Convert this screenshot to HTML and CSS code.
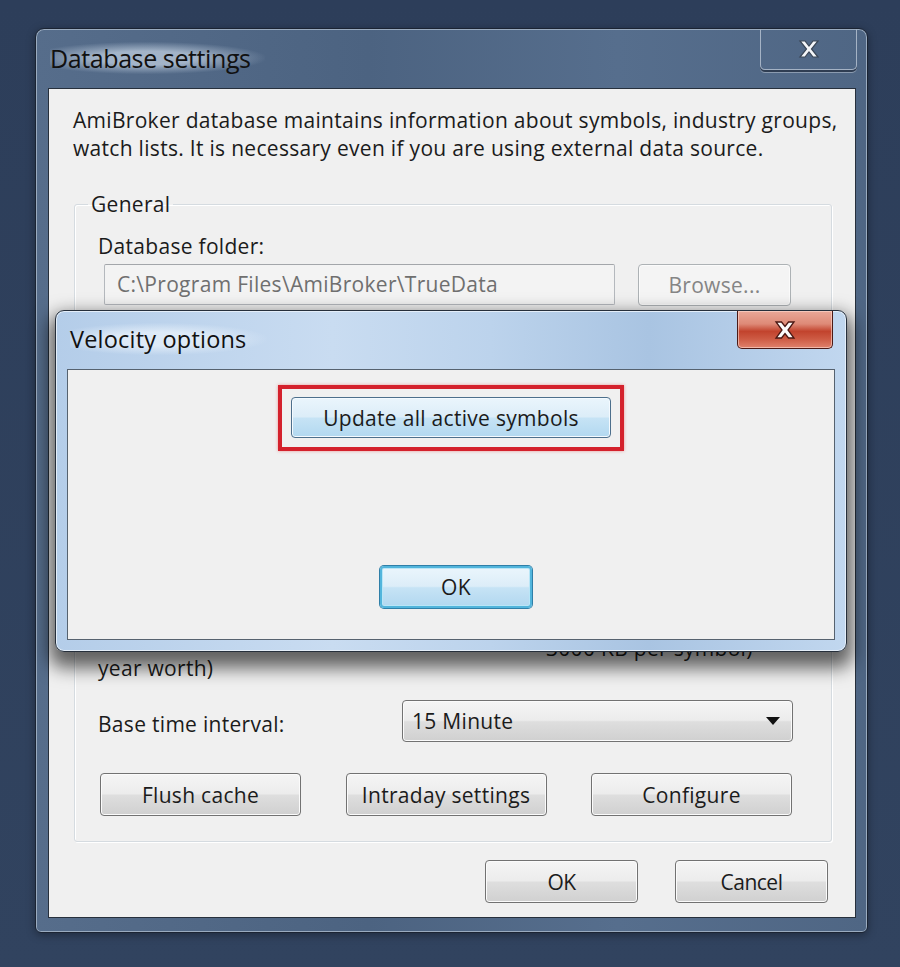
FILE: index.html
```html
<!DOCTYPE html>
<html lang="en">
<head>
    <meta charset="UTF-8">
    <title>Database settings</title>
    <link rel="stylesheet" href="styles.css">
</head>
<body>
    <div class="window">
        <div class="titlebar">
            <span class="title">Database settings</span>
            <div class="close-inactive">
                <svg width="22" height="20" viewBox="0 0 22 20"><path d="M2 2h5l4 5 4-5h5l-6.5 8 6.5 8h-5l-4-5-4 5H2l6.5-8z" fill="#f4f6f9" stroke="#3a4656" stroke-width="1.2"/></svg>
            </div>
        </div>
        <div class="client">
            <p class="intro">AmiBroker database maintains information about symbols, industry groups,<br>watch lists. It is necessary even if you are using external data source.</p>
            <fieldset class="group">
                <legend>General</legend>
                <div class="label-row">Database folder:</div>
                <div class="folder-row">
                    <div class="path-input">C:\Program Files\AmiBroker\TrueData</div>
                    <div class="btn btn-disabled browse">Browse...</div>
                </div>
                <div class="bars-row">
                    <div class="bars-label">Number of bars to load (1<br>year worth)</div>
                    <div class="bars-note">3000 KB per symbol)</div>
                </div>
                <div class="interval-row">
                    <span>Base time interval:</span>
                    <div class="btn combo">
                        <span>15 Minute</span>
                        <svg width="14" height="8" viewBox="0 0 14 8"><path d="M0 0h14L7 8z" fill="#111"/></svg>
                    </div>
                </div>
                <div class="action-row">
                    <div class="btn action">Flush cache</div>
                    <div class="btn action">Intraday settings</div>
                    <div class="btn action">Configure</div>
                </div>
            </fieldset>
            <div class="dialog-buttons">
                <div class="btn dlg-btn">OK</div>
                <div class="btn dlg-btn">Cancel</div>
            </div>
        </div>
    </div>

    <div class="popup">
        <div class="popup-titlebar">
            <span class="popup-title">Velocity options</span>
            <div class="close-red">
                <svg width="24" height="20" viewBox="0 0 24 20"><path d="M3 2h5.5l3.5 4.5 3.5-4.5H21l-6 8 6 8h-5.5L12 13.5 8.5 18H3l6-8z" fill="#fbfbfb" stroke="#4a1712" stroke-width="1.3"/></svg>
            </div>
        </div>
        <div class="popup-client">
            <div class="highlight">
                <div class="btn btn-blue update">Update all active symbols</div>
            </div>
            <div class="btn btn-blue btn-default ok">OK</div>
        </div>
    </div>
</body>
</html>
```

FILE: styles.css
```css
body {
    margin: 0;
    background: linear-gradient(#2d3e5a, #31435f);
    font-family: "Open Sans", "Noto Sans", sans-serif;
    font-size: 21px;
    letter-spacing: 0.3px;
    color: #1b1b1b;
    height: 967px;
    position: relative;
    overflow: hidden;
}
.window {
    margin: 28px 0 0 35px;
    width: 833px;
    box-sizing: border-box;
    border: 1px solid #1b2433;
    border-radius: 9px 9px 6px 6px;
    background: linear-gradient(to right, #566d8b, #4c6381 40%, #566e8d 70%, #4f6684);
    box-shadow: inset 0 0 0 1px #9aabbf, 0 2px 8px rgba(0, 0, 0, 0.35);
    padding: 0 0 14px 0;
}
.titlebar {
    height: 59px;
    display: flex;
    justify-content: space-between;
    align-items: flex-start;
    padding-left: 14px;
    padding-right: 10px;
}
.title {
    margin-top: 13px;
    font-size: 25px;
    letter-spacing: -0.4px;
    color: #111;
    line-height: 32px;
    padding: 0 14px 0 0;
    background: radial-gradient(ellipse at 45% 50%, rgba(190, 205, 222, 0.75) 30%, rgba(190, 205, 222, 0) 72%);
}
.close-inactive {
    width: 97px;
    height: 41px;
    box-sizing: border-box;
    border: 1px solid #a5b3c5;
    border-top: none;
    border-radius: 0 0 5px 5px;
    box-shadow: 0 2px 0 #2f3d52, 0 3px 0 #8b9bb0;
    display: flex;
    align-items: center;
    justify-content: center;
}
.client {
    margin: 0 11px 0 12px;
    border: 1px solid #27303c;
    background: #f0f0f0;
    padding: 0 0 14px 0;
}
.intro {
    margin: 17px 0 0 24px;
    line-height: 28px;
}
.group {
    margin: 28px 23px 0 25px;
    border: 1px solid #d5dbe0;
    border-radius: 3px;
    box-shadow: inset 1px 1px 0 #fff, 1px 1px 0 #fff;
    padding: 0 39px 25px 23px;
    min-width: 0;
}
.group legend {
    margin-left: -10px;
    padding: 0 3px;
    line-height: 28px;
}
.label-row {
    margin-top: 14px;
    line-height: 28px;
}
.folder-row {
    margin-top: 3px;
    display: flex;
    align-items: center;
    justify-content: space-between;
    height: 43px;
}
.path-input {
    margin-left: 6px;
    width: 511px;
    height: 41px;
    box-sizing: border-box;
    border: 1px solid #b4b8bd;
    border-top-color: #a3a6aa;
    border-radius: 2px;
    background: #f3f3f3;
    color: #6f6f6f;
    padding-left: 12px;
    line-height: 38px;
}
.btn {
    box-sizing: border-box;
    border: 1px solid #727272;
    border-radius: 4px;
    background: linear-gradient(#f5f5f5 0%, #ececec 48%, #dedede 52%, #d0d0d0 100%);
    box-shadow: inset 0 0 0 1px #fbfbfb;
    display: flex;
    align-items: center;
    justify-content: center;
    white-space: nowrap;
}
.btn-disabled {
    border-color: #adb2b5;
    background: #f4f4f4;
    color: #858585;
}
.browse {
    width: 153px;
    height: 42px;
    margin-right: 1px;
}
.bars-row {
    margin-top: 320px;
    display: flex;
    align-items: center;
    line-height: 28px;
}
.bars-label {
    width: 448px;
    color: #1b1b1b;
}
.bars-note {
    margin-top: -12px;
}
.interval-row {
    margin-top: 18px;
    display: flex;
    justify-content: space-between;
    align-items: center;
}
.interval-row span {
    margin-top: 6px;
}
.combo {
    width: 391px;
    height: 42px;
    margin-right: -1px;
    justify-content: space-between;
    padding: 0 12px 0 9px;
}
.combo span {
    margin-top: 0;
}
.action-row {
    margin-top: 31px;
    display: flex;
    justify-content: space-between;
    padding-left: 2px;
}
.action {
    width: 201px;
    height: 43px;
}
.dialog-buttons {
    margin: 18px 27px 0 0;
    display: flex;
    justify-content: flex-end;
    gap: 37px;
}
.dlg-btn {
    width: 153px;
    height: 43px;
    letter-spacing: -0.5px;
}
.popup {
    position: absolute;
    left: 55px;
    top: 310px;
    width: 792px;
    height: 342px;
    box-sizing: border-box;
    border: 1px solid #262f3b;
    border-radius: 9px;
    background: linear-gradient(to right, #b4cde9, #c9dcf1 35%, #bcd3ec 55%, #a9c4e2 75%, #c1d7ef);
    box-shadow: inset 0 0 0 1px #e4eef9, 0 10px 18px 6px rgba(0, 0, 0, 0.6);
    padding: 0 11px 11px 11px;
}
.popup-titlebar {
    height: 58px;
    display: flex;
    justify-content: space-between;
    align-items: flex-start;
    padding-left: 3px;
}
.popup-title {
    margin-top: 12px;
    font-size: 23.5px;
    letter-spacing: 0.2px;
    line-height: 32px;
    color: #111;
    padding-right: 20px;
    background: radial-gradient(ellipse at 45% 50%, rgba(230, 240, 250, 0.8) 30%, rgba(230, 240, 250, 0) 72%);
}
.close-red {
    width: 96px;
    height: 38px;
    box-sizing: border-box;
    margin-right: 2px;
    border: 1px solid #4b1a16;
    border-top: none;
    border-radius: 0 0 5px 5px;
    background: linear-gradient(#eaa898 0%, #de8a77 35%, #c2432d 55%, #cd5a43 75%, #e0826c 100%);
    box-shadow: inset 0 0 0 1px rgba(255, 220, 210, 0.6);
    display: flex;
    align-items: center;
    justify-content: center;
}
.popup-client {
    height: 271px;
    box-sizing: border-box;
    border: 1px solid #56626f;
    background: #f0f0f0;
    display: flex;
    flex-direction: column;
    align-items: center;
}
.highlight {
    margin-top: 15px;
    border: 4px solid #d4212c;
    padding: 8px 9px 9px 9px;
    box-shadow: 0 0 3px rgba(230, 60, 60, 0.5);
}
.btn-blue {
    border-color: #4d6f8c;
    background: linear-gradient(#eaf5fc 0%, #dcedf8 48%, #c6e3f5 52%, #b2d8f0 100%);
    box-shadow: inset 0 0 0 1px #f4faff;
}
.update {
    width: 320px;
    height: 41px;
}
.btn-default {
    border: 2px solid #52b5dc;
    box-shadow: inset 0 0 0 1px #b9e6f7, 0 0 0 1px #2f7fa8;
}
.ok {
    margin-top: 115px;
    margin-left: 10px;
    width: 152px;
    height: 42px;
}
```
